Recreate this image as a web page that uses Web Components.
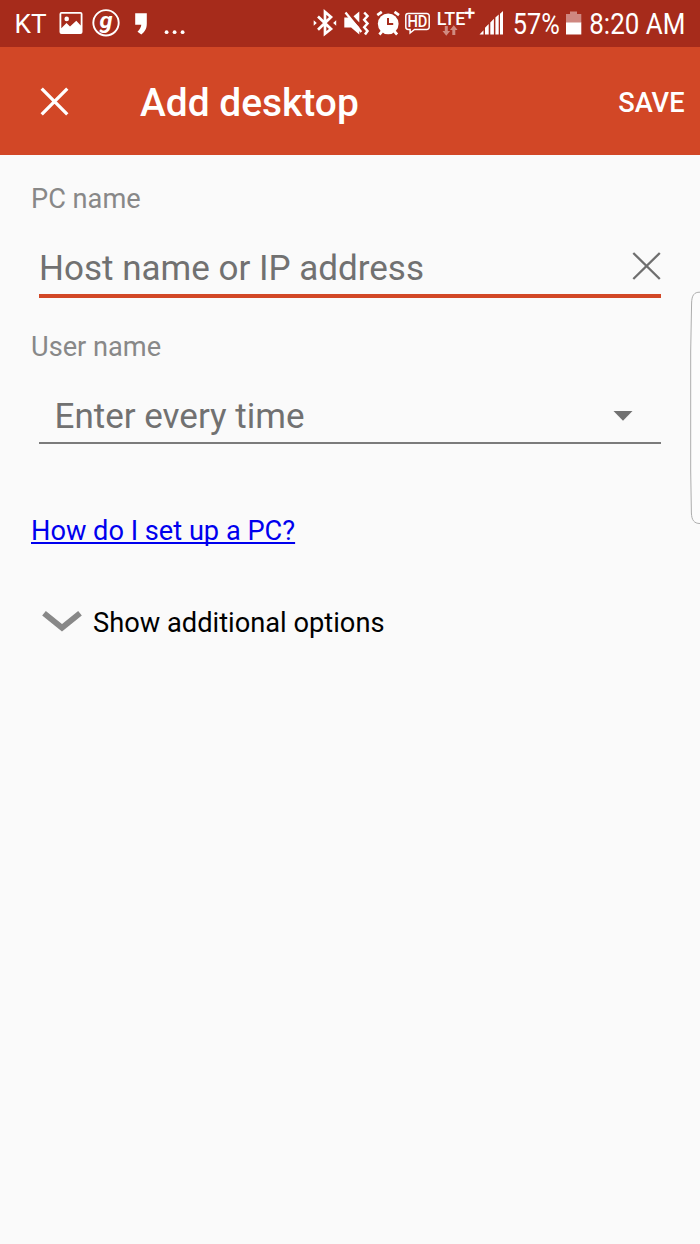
<!DOCTYPE html>
<html lang="en">
<head>
<meta charset="utf-8">
<title>Add desktop</title>
<style>
body { margin: 0; background: #fafafa; font-family: Roboto, sans-serif; }
</style>
</head>
<body>
<desktop-screen></desktop-screen>
<script>
function define(name, html) {
  const template = document.createElement('template');
  template.innerHTML = html;
  customElements.define(name, class extends HTMLElement {
    constructor() {
      super();
      this.attachShadow({ mode: 'open' }).append(template.content.cloneNode(true));
    }
  });
}

define('status-bar', `
<style>
:host { display: flex; justify-content: space-between; height: 47px; background: #a62b1b; color: #fff; }
div { display: flex; }
svg { display: block; height: 47px; fill: #fff; flex: none; overflow: visible; }
text { font-family: Roboto, sans-serif; }
</style>
<div>
  <svg width="52" viewBox="0 0 52 47"><text x="14.5" y="32.500" font-size="26" textLength="32" lengthAdjust="spacingAndGlyphs">KT</text></svg>
  <svg width="36" viewBox="52 0 36 47"><path fill-rule="evenodd" d="M61.500 12h19a2 2 0 0 1 2 2v18a2 2 0 0 1-2 2h-19a2 2 0 0 1-2-2v-18a2 2 0 0 1 2-2zM61.300 13.800v14.400l5.200-5.200 3.500 3.600 6.300-5.800 4.400 4.700V13.800z"/><circle cx="66.700" cy="18.900" r="2.300"/></svg>
  <svg width="36" viewBox="88 0 36 47"><circle cx="106" cy="22.800" r="12.700" fill="none" stroke="#fff" stroke-width="1.900"/><text x="99.600" y="27.500" font-size="22" font-weight="700" font-style="italic" textLength="13" lengthAdjust="spacingAndGlyphs">g</text></svg>
  <svg width="32" viewBox="124 0 32 47"><path d="M135.200 13.200h11.600v10.300c0 5.400-2.200 8.400-5.500 11l-3.800-2.700c2.300-2.500 3.600-4.600 3.800-7h-6.100z"/></svg>
  <svg width="34" viewBox="156 0 34 47"><circle cx="166.600" cy="32.200" r="1.900"/><circle cx="174.600" cy="32.200" r="1.900"/><circle cx="182.600" cy="32.200" r="1.900"/></svg>
</div>
<div>
  <svg width="30" viewBox="310 0 30 47"><path d="M318 16.500 331 29 325 33.800V12L331 17 318 29.700" fill="none" stroke="#fff" stroke-width="2.700"/><path d="M313.700 20.300l3.100 2.700-3.100 2.700zM336.200 20.300l-3.100 2.700 3.100 2.700z"/></svg>
  <svg width="32" viewBox="340 0 32 47"><path d="M344.300 17.500h5.300l9.700 9.800v7.300l-8.200-7h-6.800zM353.500 16.200l5.800-4.600v11z"/><path d="M345.500 12.500 361.300 32" stroke="#fff" stroke-width="2.300"/><path d="M364.200 12.500 367.500 16l-3.300 3.700 3.300 3.800-3.300 3.700 3.300 3.800-2.500 3.400" fill="none" stroke="#fff" stroke-width="2.500"/></svg>
  <svg width="30" viewBox="372 0 30 47"><circle cx="388.200" cy="23.800" r="10.400"/><path d="M377.300 15.200l4.500-3.400M399 15.200l-4.500-3.400M382 31.500l-2.600 3M394.500 31.500l2.600 3" stroke="#fff" stroke-width="2.700"/><path d="M388 18v6h5.200" fill="none" stroke="#a62b1b" stroke-width="2"/></svg>
  <svg width="31" viewBox="402 0 31 47"><path d="M408.200 13.500h18.600a2.400 2.400 0 0 1 2.400 2.400v11.200a2.400 2.400 0 0 1-2.400 2.400H414.500l-4.400 3.500v-3.500h-1.900a2.400 2.400 0 0 1-2.400-2.400V15.900a2.400 2.400 0 0 1 2.400-2.400z" fill="none" stroke="#fff" stroke-width="1.500"/><text x="407.400" y="27.200" font-size="15.600" font-weight="500" textLength="20" lengthAdjust="spacingAndGlyphs">HD</text></svg>
  <svg width="44" viewBox="433 0 44 47"><text x="436.800" y="25" font-size="17.500" font-weight="500" textLength="28.500" lengthAdjust="spacingAndGlyphs">LTE</text><text x="464.300" y="20.300" font-size="20" font-weight="500" textLength="11" lengthAdjust="spacingAndGlyphs">+</text><path d="M444.800 26h3v5h2.300l-3.800 4.700-3.800-4.700h2.300zM452.300 35v-5H450l3.800-4.700 3.800 4.700h-2.300v5z" fill="#d08b81"/></svg>
  <svg width="29" viewBox="477 0 29 47"><path d="M479.500 34.500l4-4.300v4.300zM485 34.500V27.800l3.700-3.800v10.500zM490.300 34.500V22.500l3.600-3.800v15.800zM495.400 34.500V17.500l3.300-3v20zM500 34.500V13.700l3-2.800v23.600z"/></svg>
  <svg width="57" viewBox="506 0 57 47"><text x="512.700" y="34" font-size="29" textLength="47" lengthAdjust="spacingAndGlyphs">57%</text></svg>
  <svg width="22" viewBox="563 0 22 47"><path d="M566 14h4v-2.500h7V14h4.300v9H566z" fill="#cf8780"/><path d="M566 22.500h15.300v12H566z"/></svg>
  <svg width="115" viewBox="585 0 115 47"><text x="589.300" y="34" font-size="29" textLength="96" lengthAdjust="spacingAndGlyphs">8:20 AM</text></svg>
</div>`);

define('app-bar', `
<style>
:host { display: flex; align-items: center; box-sizing: border-box; height: 108px; padding: 3px 15.500px 0 40px; background: #d24726; color: #fff; }
svg { display: block; flex: none; margin-right: 71px; margin-bottom: 3px; }
h1 { flex: 1; margin: 0; font-size: 38.900px; font-weight: 500; line-height: 46px; }
button { border: 0; padding: 0; background: none; color: inherit; font: 500 27.200px/32px Roboto, sans-serif; }
</style>
<svg width="29" height="29" viewBox="0 0 29 29"><path d="M1.700 1.700 27.300 27.300M27.300 1.700 1.700 27.300" stroke="#fff" stroke-width="3.300"/></svg>
<h1><slot></slot></h1><button>SAVE</button>`);

define('form-field', `
<style>
:host { display: block; height: 148px; }
label { display: block; font-size: 27.200px; line-height: 32px; color: #888; }
.control { display: flex; align-items: center; justify-content: space-between; box-sizing: border-box; height: 57px; margin: 24px 8px 0; padding: 3px 0 0; font-size: 35px; color: #717171; border-bottom: 2px solid #7b7b7b; }
:host([active]) .control { border-bottom: 4px solid #d24726; height: 59px; }
:host([select]) .control { padding: 3px 28.500px 0 15.500px; }
.value { line-height: 50px; padding-top: 2px; white-space: pre; }
</style>
<label><slot name="label"></slot></label>
<div class="control"><span class="value"><slot></slot></span><slot name="icon"></slot></div>`);

define('clear-icon', `
<style>:host { display: block; margin-top: -4px; } svg { display: block; }</style>
<svg width="29" height="28" viewBox="0 0 29 28"><path d="M1.300 1 27.800 27M27.800 1 1.300 27" stroke="#6f6f6f" stroke-width="2.300"/></svg>`);

define('dropdown-icon', `
<style>:host { display: block; } svg { display: block; }</style>
<svg width="20" height="10" viewBox="0 0 20 10"><path d="M.5 0h19L10 9.800z" fill="#717171"/></svg>`);

define('help-link', `
<style>
:host { display: block; }
a { font-size: 27.200px; line-height: 32px; color: #0000ee; text-decoration: underline; text-decoration-thickness: 1.500px; text-underline-offset: 2px; text-decoration-skip-ink: none; }
</style>
<a href="#"><slot></slot></a>`);

define('options-toggle', `
<style>
:host { display: flex; align-items: center; font-size: 27.250px; line-height: 32px; color: #000; }
svg { display: block; margin: -2px 11px 0 11px; }
</style>
<svg width="40" height="22" viewBox="0 0 40 22"><path d="M2 2.300 20 16.800 38 2.300" fill="none" stroke="#888" stroke-width="5.800"/></svg>
<span><slot></slot></span>`);

define('edge-handle', `
<style>
:host { display: block; position: absolute; left: 690px; top: 291px; width: 10px; height: 234px; overflow: hidden; }
svg { display: block; }
</style>
<svg width="10" height="234" viewBox="0 0 10 234"><path d="M10 1.200C4 1 1.800 4.500 1.600 12L.7 60V180L1.400 222C1.700 229 4 232.500 10 232.500" fill="#fcfcfc" stroke="#adadad"/></svg>`);

define('desktop-screen', `
<style>
:host { display: block; position: relative; width: 700px; height: 1244px; overflow: hidden; background: #fafafa; }
main { padding: 28px 31px 0; }
help-link { margin-top: 36px; }
options-toggle { margin-top: 60px; }
</style>
<status-bar></status-bar>
<app-bar>Add desktop</app-bar>
<main>
  <form-field active><span slot="label">PC name</span>Host name or IP address<clear-icon slot="icon"></clear-icon></form-field>
  <form-field select><span slot="label">User name</span>Enter every time<dropdown-icon slot="icon"></dropdown-icon></form-field>
  <help-link>How do I set up a PC?</help-link>
  <options-toggle>Show additional options</options-toggle>
</main>
<edge-handle></edge-handle>`);
</script>
</body>
</html>
